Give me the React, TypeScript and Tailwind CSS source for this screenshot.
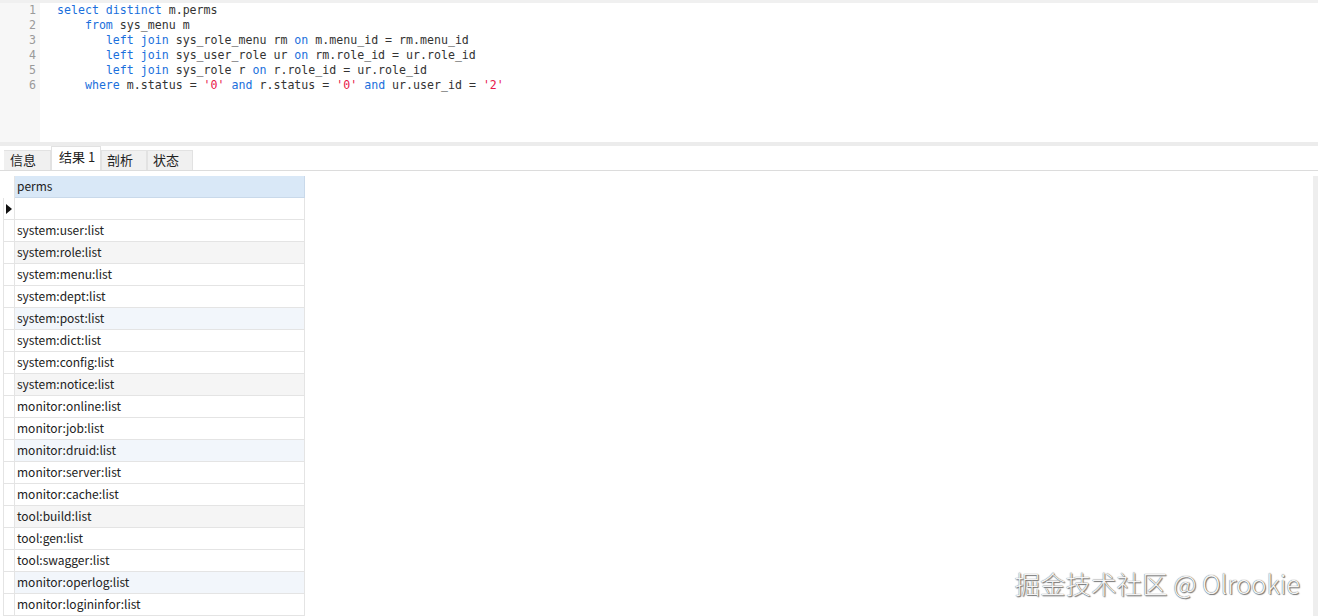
import React from 'react';

type Tok = [string, string?];

const K = 'text-[#1a6fdc]';
const S = 'text-[#e8174a]';

const codeLines: Tok[][] = [
  [['select distinct', K], [' m.perms']],
  [['    '], ['from', K], [' sys_menu m']],
  [['       '], ['left join', K], [' sys_role_menu rm '], ['on', K], [' m.menu_id = rm.menu_id']],
  [['       '], ['left join', K], [' sys_user_role ur '], ['on', K], [' rm.role_id = ur.role_id']],
  [['       '], ['left join', K], [' sys_role r '], ['on', K], [' r.role_id = ur.role_id']],
  [['    '], ['where', K], [' m.status = '], ["'0'", S], [' '], ['and', K], [' r.status = '], ["'0'", S], [' '], ['and', K], [' ur.user_id = '], ["'2'", S]],
];

const perms = [
  '',
  'system:user:list',
  'system:role:list',
  'system:menu:list',
  'system:dept:list',
  'system:post:list',
  'system:dict:list',
  'system:config:list',
  'system:notice:list',
  'monitor:online:list',
  'monitor:job:list',
  'monitor:druid:list',
  'monitor:server:list',
  'monitor:cache:list',
  'tool:build:list',
  'tool:gen:list',
  'tool:swagger:list',
  'monitor:operlog:list',
  'monitor:logininfor:list',
];

const tabs = ['信息', '结果 1', '剖析', '状态'];

const rowBg = (i: number) => {
  if (i % 3 !== 2) return 'bg-white';
  return (i / 3) % 2 < 1 ? 'bg-[#f5f5f5]' : 'bg-[#f2f6fb]';
};

const App: React.FC = () => {
  return (
    <div className="w-[1318px] h-[616px] overflow-hidden bg-white relative font-['Noto_Sans_CJK_SC','Noto_Sans',sans-serif] text-[12px] text-[#222]">
      {/* editor */}
      <div className="h-[142px] flex border-t-[3px] border-[#f0f0f0]">
        <div className="w-[40px] bg-[#f7f7f7] pr-[4px] text-right font-['DejaVu_Sans_Mono',monospace] text-[11.6px] leading-[15px] text-[#9a9a9a]">
          {codeLines.map((_, i) => (
            <div key={i}>{i + 1}</div>
          ))}
        </div>
        <pre className="pl-[17px] font-['DejaVu_Sans_Mono',monospace] text-[11.6px] leading-[15px] text-[#333]">
          {codeLines.map((line, i) => (
            <div key={i}>
              {line.map(([t, c], j) => (
                <span key={j} className={c}>{t}</span>
              ))}
            </div>
          ))}
        </pre>
      </div>

      {/* splitter */}
      <div className="h-[4px] bg-[#ececec]" />

      {/* tabs */}
      <div className="h-[25px] flex items-end pl-[4px] border-b border-[#dcdcdc]">
        {tabs.map((t, i) =>
          i === 1 ? (
            <div key={t} className="h-[24px] w-[50px] pl-[7px] bg-white border border-b-0 border-[#e2e2e2] leading-[20px] text-[13px]">
              {t}
            </div>
          ) : (
            <div
              key={t}
              className={`h-[20px] ${i === 0 ? 'w-[47px] pl-[6px] border-l-0' : 'w-[46px] pl-[5px]'} bg-[#f0f0f0] border border-b-0 border-[#e2e2e2] leading-[17px] text-[13px]`}
            >
              {t}
            </div>
          )
        )}
      </div>

      {/* grid */}
      <div className="flex mt-[5px]">
        <div className="ml-[3px] w-[302px]">
          <div className="flex h-[22px]">
            <div className="w-[12px] border-r border-[#e4e4e4]" />
            <div className="flex-1 bg-[#d9e8f7] border-b border-r border-[#c9d9ea] pl-[2px] leading-[20px]">perms</div>
          </div>
          {perms.map((p, i) => (
            <div key={i} className="flex h-[22px]">
              <div className="w-[12px] border-l border-r border-b border-[#e4e4e4] flex items-center justify-center">
                {i === 0 && (
                  <svg width="6" height="10" viewBox="0 0 6 10">
                    <path d="M0 0 L6 5 L0 10 Z" fill="#111" />
                  </svg>
                )}
              </div>
              <div className={`flex-1 ${rowBg(i)} border-b border-r border-[#e4e4e4] pl-[2px] leading-[20px]`}>{p}</div>
            </div>
          ))}
        </div>
        <div className="flex-1" />
        <div className="w-[5px] h-[440px] bg-[#eeeeee]" />
      </div>

      {/* watermark */}
      <div className="absolute right-[18px] bottom-[18px] text-[25.5px] leading-[30px] font-light text-[#f4f4f4] [text-shadow:0_0_1px_#444,1px_1px_1px_#777]">
        掘金技术社区 @ Olrookie
      </div>
    </div>
  );
};

export default App;
